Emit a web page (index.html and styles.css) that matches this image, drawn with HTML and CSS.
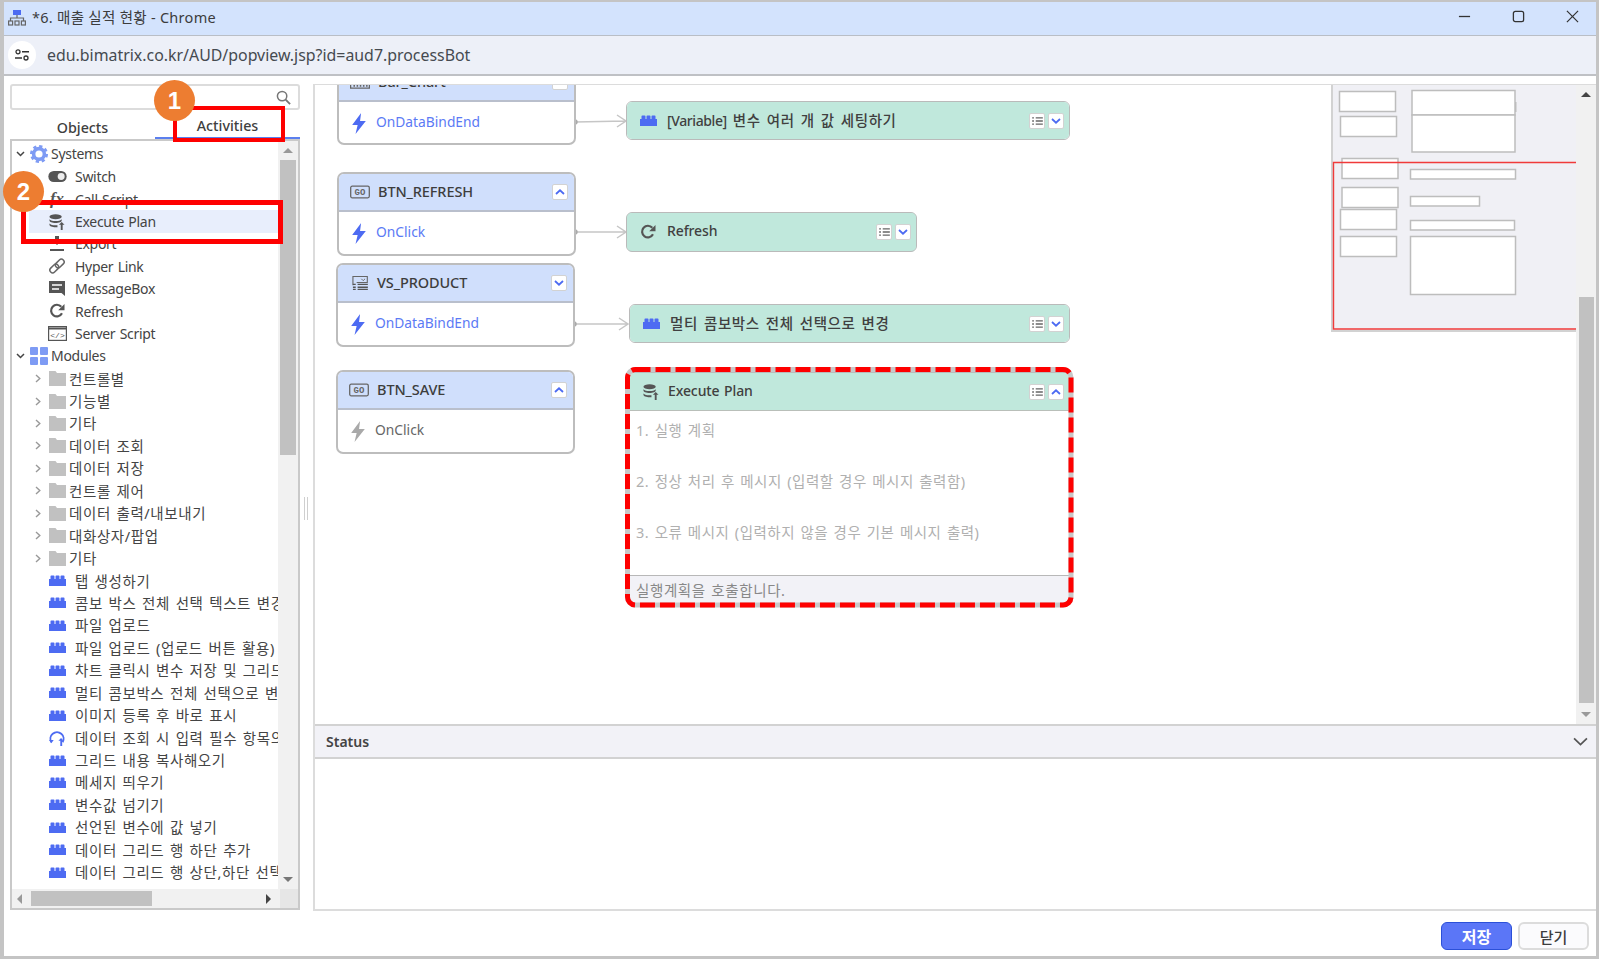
FILE: index.html
```html
<!DOCTYPE html>
<html lang="ko">
<head>
<meta charset="utf-8">
<title>*6. 매출 실적 현황 - Chrome</title>
<link rel="stylesheet" href="styles.css">
</head>
<body>
<svg class="defs" width="0" height="0" aria-hidden="true">
  <symbol id="i-lego" viewBox="0 0 17 11"><path d="M0 4h1.500V1.200Q1.500 .4 2.300 .4H4.700Q5.500 .4 5.500 1.200V4H6.500V1.200Q6.500 .4 7.300 .4H9.700Q10.500 .4 10.500 1.200V4H11.500V1.200Q11.500 .4 12.300 .4H14.700Q15.500 .4 15.500 1.200V4H17V11H0Z"/></symbol>
  <symbol id="i-bolt" viewBox="0 0 15 20"><path d="M9.500 0 1 11.500H6.200L4.200 20 14 7.500H8.500Z"/></symbol>
  <symbol id="i-list" viewBox="0 0 12 9"><path d="M0 1h2M4 1h8M0 4.500h2M4 4.500h8M0 8h2M4 8h8" stroke="#666" stroke-width="1.500" fill="none"/></symbol>
  <symbol id="i-up" viewBox="0 0 10 6"><path d="M1 5 5 1.300 9 5" fill="none" stroke="#4d6bf2" stroke-width="1.800"/></symbol>
  <symbol id="i-down" viewBox="0 0 10 6"><path d="M1 1 5 4.700 9 1" fill="none" stroke="#4d6bf2" stroke-width="1.800"/></symbol>
  <symbol id="i-db" viewBox="0 0 17 17"><g fill="#555"><ellipse cx="7" cy="3" rx="6.500" ry="2.700"/><path d="M.5 5v1.800C.5 8.300 3.300 9.500 7 9.500S13.500 8.300 13.500 6.800V5C13.500 6.500 10.700 7.500 7 7.500S.5 6.500.5 5ZM.5 9.500v1.800C.5 12.800 3.300 14 7 14H9V12H7C3.300 12 .5 11 .5 9.500Z"/><path d="M10.500 10.500 13.500 7.500 16.500 10.500H14.500V16H12.500V10.500Z" transform="translate(0 1)"/></g></symbol>
  <symbol id="i-ref" viewBox="0 0 16 16"><path d="M13 10.300A5.800 5.800 0 1 1 12.300 3.800" fill="none" stroke="#555" stroke-width="2.200"/><path d="M15.500 1V7.300H9.200Z" fill="#555"/></symbol>
  <symbol id="i-folder" viewBox="0 0 17 15"><path d="M0 0H6.500L8 2H17V15H0Z" fill="#c1c1c1"/></symbol>
  <symbol id="i-right" viewBox="0 0 6 9"><path d="M1 1 4.800 4.500 1 8" fill="none" stroke="#999" stroke-width="1.400"/></symbol>
  <symbol id="i-caret" viewBox="0 0 9 6"><path d="M1 1 4.500 4.500 8 1" fill="none" stroke="#444" stroke-width="1.500"/></symbol>
</svg>

<div class="window">
  <header class="titlebar">
    <svg class="title-ic" viewBox="0 0 18 16"><rect x="5" y="0" width="8" height="5" fill="#4d6bf2"/><path d="M9 5V8M2.500 11V8H15.500V11" fill="none" stroke="#666" stroke-width="1.200"/><g fill="none" stroke="#666" stroke-width="1.200"><rect x=".6" y="11" width="4" height="4"/><rect x="7" y="11" width="4" height="4"/><rect x="13.400" y="11" width="4" height="4"/></g></svg>
    <span class="title-text">*6. 매출 실적 현황 - Chrome</span>
    <div class="win-btns">
      <svg viewBox="0 0 14 14"><path d="M1 7H13" stroke="#333" stroke-width="1.400"/></svg>
      <svg viewBox="0 0 14 14"><rect x="1.500" y="1.500" width="11" height="11" rx="2" fill="none" stroke="#333" stroke-width="1.400"/></svg>
      <svg viewBox="0 0 14 14"><path d="M1 1 13 13M13 1 1 13" stroke="#333" stroke-width="1.300"/></svg>
    </div>
  </header>
  <div class="addrbar">
    <span class="site-btn"><svg viewBox="0 0 14 12"><circle cx="3" cy="2.800" r="2" fill="none" stroke="#333" stroke-width="1.300"/><path d="M7 2.800H14M0 9H7" stroke="#333" stroke-width="1.400"/><circle cx="11" cy="9" r="2" fill="none" stroke="#333" stroke-width="1.300"/></svg></span>
    <span class="url">edu.bimatrix.co.kr/AUD/popview.jsp?id=aud7.processBot</span>
  </div>

  <main class="workspace">
    <aside class="left">
      <div class="search"><svg viewBox="0 0 16 16"><circle cx="6.500" cy="6.500" r="5" fill="none" stroke="#777" stroke-width="1.600"/><path d="M10.300 10.300 15 15" stroke="#777" stroke-width="2"/></svg></div>
      <div class="tabs">
        <span class="tab">Objects</span>
        <span class="tab tab-on">Activities</span>
      </div>
      <div class="tree">
        <div class="tree-main">
          <div class="rows">
            <div class="row root"><svg class="caret"><use href="#i-caret"/></svg><svg class="root-ic" viewBox="0 0 20 20"><circle cx="10" cy="10" r="6" fill="none" stroke="#7e9bf4" stroke-width="4"/><circle cx="10" cy="10" r="8.300" fill="none" stroke="#7e9bf4" stroke-width="3.400" stroke-dasharray="3.500 3"/></svg><span class="en">Systems</span></div>
            <div class="row item"><span class="ib"><svg class="i-sw" viewBox="0 0 20 12"><rect width="20" height="12" rx="6" fill="#555"/><circle cx="14" cy="6" r="3.800" fill="#eee"/></svg></span><span class="en">Switch</span></div>
            <div class="row item"><span class="ib fx">fx</span><span class="en">Call Script</span></div>
            <div class="row item sel"><span class="ib"><svg class="i16"><use href="#i-db"/></svg></span><span class="en">Execute Plan</span></div>
            <div class="row item"><span class="ib"><svg class="i16" viewBox="0 0 16 16"><path d="M8 9 3.500 4.500H6V0H10V4.500H12.500ZM1 13H15V15H1Z" fill="#555"/></svg></span><span class="en">Export</span></div>
            <div class="row item"><span class="ib"><svg class="i16" viewBox="0 0 16 16"><g fill="none" stroke="#666" stroke-width="1.500"><rect x="8" y=".5" width="5.500" height="10" rx="2.750" transform="rotate(45 10.750 5.500)"/><rect x="2.500" y="5.500" width="5.500" height="10" rx="2.750" transform="rotate(45 5.250 10.500)"/></g></svg></span><span class="en">Hyper Link</span></div>
            <div class="row item"><span class="ib"><svg class="i16" viewBox="0 0 16 16"><path d="M0 0H16V15L12.500 12H0Z" fill="#555"/><path d="M3 4H13M3 8H10" stroke="#fff" stroke-width="1.400"/></svg></span><span class="en">MessageBox</span></div>
            <div class="row item"><span class="ib"><svg class="i16"><use href="#i-ref"/></svg></span><span class="en">Refresh</span></div>
            <div class="row item"><span class="ib"><svg class="i19" viewBox="0 0 19 15"><rect x=".6" y=".6" width="17.800" height="13.800" fill="none" stroke="#555" stroke-width="1.200"/><path d="M.6 2.500H18.400" stroke="#555" stroke-width="2"/><text x="9.500" y="11.500" text-anchor="middle" class="svgt" font-size="8" fill="#555">&lt;/&gt;</text></svg></span><span class="en">Server Script</span></div>
            <div class="row root"><svg class="caret"><use href="#i-caret"/></svg><svg class="root-ic" viewBox="0 0 18 18"><g fill="#7e9bf4"><rect width="8" height="8" rx="1"/><rect x="10" width="8" height="8" rx="1"/><rect y="10" width="8" height="8" rx="1"/><rect x="10" y="10" width="8" height="8" rx="1"/></g></svg><span class="en">Modules</span></div>
            <div class="row fold"><svg class="chev"><use href="#i-right"/></svg><svg class="folder"><use href="#i-folder"/></svg><span class="ko">컨트롤별</span></div>
            <div class="row fold"><svg class="chev"><use href="#i-right"/></svg><svg class="folder"><use href="#i-folder"/></svg><span class="ko">기능별</span></div>
            <div class="row fold"><svg class="chev"><use href="#i-right"/></svg><svg class="folder"><use href="#i-folder"/></svg><span class="ko">기타</span></div>
            <div class="row fold"><svg class="chev"><use href="#i-right"/></svg><svg class="folder"><use href="#i-folder"/></svg><span class="ko">데이터 조회</span></div>
            <div class="row fold"><svg class="chev"><use href="#i-right"/></svg><svg class="folder"><use href="#i-folder"/></svg><span class="ko">데이터 저장</span></div>
            <div class="row fold"><svg class="chev"><use href="#i-right"/></svg><svg class="folder"><use href="#i-folder"/></svg><span class="ko">컨트롤 제어</span></div>
            <div class="row fold"><svg class="chev"><use href="#i-right"/></svg><svg class="folder"><use href="#i-folder"/></svg><span class="ko">데이터 출력/내보내기</span></div>
            <div class="row fold"><svg class="chev"><use href="#i-right"/></svg><svg class="folder"><use href="#i-folder"/></svg><span class="ko">대화상자/팝업</span></div>
            <div class="row fold"><svg class="chev"><use href="#i-right"/></svg><svg class="folder"><use href="#i-folder"/></svg><span class="ko">기타</span></div>
            <div class="row item"><span class="ib"><svg class="lego"><use href="#i-lego"/></svg></span><span class="ko">탭 생성하기</span></div>
            <div class="row item"><span class="ib"><svg class="lego"><use href="#i-lego"/></svg></span><span class="ko">콤보 박스 전체 선택 텍스트 변경</span></div>
            <div class="row item"><span class="ib"><svg class="lego"><use href="#i-lego"/></svg></span><span class="ko">파일 업로드</span></div>
            <div class="row item"><span class="ib"><svg class="lego"><use href="#i-lego"/></svg></span><span class="ko">파일 업로드 (업로드 버튼 활용)</span></div>
            <div class="row item"><span class="ib"><svg class="lego"><use href="#i-lego"/></svg></span><span class="ko">차트 클릭시 변수 저장 및 그리드</span></div>
            <div class="row item"><span class="ib"><svg class="lego"><use href="#i-lego"/></svg></span><span class="ko">멀티 콤보박스 전체 선택으로 변경</span></div>
            <div class="row item"><span class="ib"><svg class="lego"><use href="#i-lego"/></svg></span><span class="ko">이미지 등록 후 바로 표시</span></div>
            <div class="row item"><span class="ib"><svg class="i16" viewBox="0 0 17 17"><path d="M2.500 13A7 7 0 1 1 14.500 13" fill="none" stroke="#4d6bf2" stroke-width="2"/><path d="M0 10.500H5L2.500 14ZM12 17V11.500H10L12.800 8.500 15.500 11.500H14V17Z" fill="#4d6bf2"/></svg></span><span class="ko">데이터 조회 시 입력 필수 항목의</span></div>
            <div class="row item"><span class="ib"><svg class="lego"><use href="#i-lego"/></svg></span><span class="ko">그리드 내용 복사해오기</span></div>
            <div class="row item"><span class="ib"><svg class="lego"><use href="#i-lego"/></svg></span><span class="ko">메세지 띄우기</span></div>
            <div class="row item"><span class="ib"><svg class="lego"><use href="#i-lego"/></svg></span><span class="ko">변수값 넘기기</span></div>
            <div class="row item"><span class="ib"><svg class="lego"><use href="#i-lego"/></svg></span><span class="ko">선언된 변수에 값 넣기</span></div>
            <div class="row item"><span class="ib"><svg class="lego"><use href="#i-lego"/></svg></span><span class="ko">데이터 그리드 행 하단 추가</span></div>
            <div class="row item"><span class="ib"><svg class="lego"><use href="#i-lego"/></svg></span><span class="ko">데이터 그리드 행 상단,하단 선택</span></div>
          </div>
          <div class="vscroll">
            <span class="arrow arrow-up"></span>
            <span class="vthumb"></span>
            <span class="arrow arrow-dn"></span>
          </div>
        </div>
        <div class="hscroll">
          <span class="arrow-l"></span>
          <span class="hthumb"></span>
          <span class="arrow-r"></span>
          <span class="corner"></span>
        </div>
      </div>
    </aside>

    <div class="splitter"><span class="grip"></span></div>

    <section class="right">
      <div class="canvas">
        <svg class="wires" viewBox="315 85 1281 639">
          <g fill="none" stroke="#c6c6c6" stroke-width="1.500">
            <path d="M575 122 626 121M617 115 626 121 617 127"/>
            <path d="M575 232 626 232M617 226 626 232 617 238"/>
            <path d="M574 324 628 324M619 318 628 324 619 330"/>
          </g>
          <g fill="#aaa"><circle cx="575" cy="122" r="2.700"/><circle cx="575" cy="232" r="2.700"/><circle cx="574" cy="324" r="2.700"/></g>
        </svg>

        <article class="node n-bar">
          <div class="nhead"><svg class="nic" viewBox="0 0 19 13"><path d="M.6 0V12.400H18.400V0" fill="none" stroke="#666" stroke-width="1.200"/><path d="M4 11V5M7 11V3M10 11V6M13 11V2M16 11V5" stroke="#666" stroke-width="1.500"/></svg><span class="ntitle">Bar_Chart</span><span class="sbtn"><svg class="chv"><use href="#i-up"/></svg></span></div>
          <div class="nbody"><svg class="bolt"><use href="#i-bolt"/></svg><span>OnDataBindEnd</span></div>
        </article>
        <article class="node n-refresh">
          <div class="nhead"><svg class="nic" viewBox="0 0 20 13"><rect x=".7" y=".7" width="18.600" height="11.600" rx="1.500" fill="none" stroke="#666" stroke-width="1.300"/><text x="10" y="9.700" text-anchor="middle" class="svgt" font-size="9" font-weight="700" fill="#666">GO</text></svg><span class="ntitle">BTN_REFRESH</span><span class="sbtn"><svg class="chv"><use href="#i-up"/></svg></span></div>
          <div class="nbody"><svg class="bolt"><use href="#i-bolt"/></svg><span>OnClick</span></div>
        </article>
        <article class="node n-vs">
          <div class="nhead"><svg class="nic" viewBox="0 0 19 15"><path d="M3 10V.6H18.400V7H7" fill="none" stroke="#666" stroke-width="1.200"/><path d="M12 3 14 5 16 3" fill="none" stroke="#666"/><path d="M3 9H6M3 12H6M3 14.500H6M8 9H19M8 12H19M8 14.500H19" stroke="#555" stroke-width="1.500"/></svg><span class="ntitle">VS_PRODUCT</span><span class="sbtn"><svg class="chv"><use href="#i-down"/></svg></span></div>
          <div class="nbody"><svg class="bolt"><use href="#i-bolt"/></svg><span>OnDataBindEnd</span></div>
        </article>
        <article class="node n-save">
          <div class="nhead"><svg class="nic" viewBox="0 0 20 13"><rect x=".7" y=".7" width="18.600" height="11.600" rx="1.500" fill="none" stroke="#666" stroke-width="1.300"/><text x="10" y="9.700" text-anchor="middle" class="svgt" font-size="9" font-weight="700" fill="#666">GO</text></svg><span class="ntitle">BTN_SAVE</span><span class="sbtn"><svg class="chv"><use href="#i-up"/></svg></span></div>
          <div class="nbody off"><svg class="bolt"><use href="#i-bolt"/></svg><span>OnClick</span></div>
        </article>

        <article class="act a-var">
          <div class="ahead"><svg class="alego"><use href="#i-lego"/></svg><span class="atitle ko"><span class="brk">[Variable]</span> 변수 여러 개 값 세팅하기</span><span class="sbtn"><svg class="lst"><use href="#i-list"/></svg></span><span class="sbtn"><svg class="chv"><use href="#i-down"/></svg></span></div>
        </article>
        <article class="act a-ref">
          <div class="ahead"><svg class="aref"><use href="#i-ref"/></svg><span class="atitle">Refresh</span><span class="sbtn"><svg class="lst"><use href="#i-list"/></svg></span><span class="sbtn"><svg class="chv"><use href="#i-down"/></svg></span></div>
        </article>
        <article class="act a-multi">
          <div class="ahead"><svg class="alego"><use href="#i-lego"/></svg><span class="atitle ko">멀티 콤보박스 전체 선택으로 변경</span><span class="sbtn"><svg class="lst"><use href="#i-list"/></svg></span><span class="sbtn"><svg class="chv"><use href="#i-down"/></svg></span></div>
        </article>
        <article class="act a-exec">
          <div class="ahead"><svg class="adb"><use href="#i-db"/></svg><span class="atitle">Execute Plan</span><span class="sbtn"><svg class="lst"><use href="#i-list"/></svg></span><span class="sbtn"><svg class="chv"><use href="#i-up"/></svg></span></div>
          <div class="abody">
            <p class="ko">1. 실행 계획</p>
            <p class="ko">2. 정상 처리 후 메시지 (입력할 경우 메시지 출력함)</p>
            <p class="ko">3. 오류 메시지 (입력하지 않을 경우 기본 메시지 출력)</p>
          </div>
          <div class="afoot ko">실행계획을 호출합니다.</div>
        </article>

        <svg class="minimap" viewBox="1331 85 265 247">
          <rect x="1331" y="85" width="265" height="247" fill="#f0f0f5"/>
          <path d="M1332 85V331H1596" fill="none" stroke="#d2d2d2" stroke-width="2"/>
          <g fill="#fff" stroke="#bdbdbd" stroke-width="1.500">
            <rect x="1339.500" y="91.500" width="56" height="20"/>
            <rect x="1340.500" y="116.500" width="56" height="20"/>
            <rect x="1412" y="90.500" width="103" height="24.500"/>
            <rect x="1412" y="115" width="103" height="37"/>
            <rect x="1342" y="158.500" width="56" height="20"/>
            <rect x="1342" y="187.500" width="56" height="20"/>
            <rect x="1340.500" y="209.500" width="56" height="20"/>
            <rect x="1340.500" y="236.500" width="56" height="20"/>
            <rect x="1410.500" y="169.500" width="105" height="9.500"/>
            <rect x="1410.500" y="196.500" width="69" height="9.500"/>
            <rect x="1410.500" y="220.500" width="104" height="9.500"/>
            <rect x="1410.500" y="236.500" width="105" height="58"/>
          </g>
          <rect x="1515" y="102" width="1.500" height="10" fill="#bdbdbd"/>
          <path d="M1576 162.500H1333.500V329H1576" fill="none" stroke="#f03a3a" stroke-width="1.400"/>
        </svg>

        <div class="cscroll">
          <span class="arrow arrow-up"></span>
          <span class="cthumb"></span>
          <span class="arrow arrow-dn"></span>
        </div>
      </div>
      <div class="status-head"><span>Status</span><svg viewBox="0 0 14 8"><path d="M1 1 7 6.800 13 1" fill="none" stroke="#555" stroke-width="1.600"/></svg></div>
      <div class="status-body"></div>
    </section>
  </main>

  <footer class="footer">
    <button class="btn btn-primary">저장</button>
    <button class="btn">닫기</button>
  </footer>
</div>

<div class="marks">
  <svg class="dash" viewBox="0 0 1599 959">
    <rect x="627.500" y="369.500" width="443.500" height="235.500" rx="8" fill="none" stroke="#c8c8c8" stroke-width="5"/>
    <rect x="627.500" y="369.500" width="443.500" height="235.500" rx="8" fill="none" stroke="#fe0000" stroke-width="5" stroke-dasharray="15 5"/>
  </svg>
  <div class="redbox rb-1"></div>
  <div class="redbox rb-2"></div>
  <div class="badge bd-1">1</div>
  <div class="badge bd-2">2</div>
</div>
</body>
</html>
```

FILE: styles.css
```css
* { box-sizing: border-box; }
html, body { margin: 0; height: 100%; }
body {
  position: relative;
  overflow: hidden;
  background: #fff;
  color: #444;
  font-family: "Noto Sans", "Noto Sans CJK KR", sans-serif;
  font-size: 14px;
}
.defs { position: absolute; }
.svgt { font-family: "Liberation Mono", monospace; }
.ko { font-size: 14.5px; letter-spacing: .6px; word-spacing: 1.3px; }
.en { letter-spacing: -.3px; word-spacing: 1px; }

.window {
  display: flex;
  flex-direction: column;
  height: 959px;
  border: solid #c4c4c4;
  border-width: 2px 3px 3px 4px;
}

/* Title and address bars */
.titlebar {
  display: flex;
  align-items: center;
  height: 34px;
  padding: 0 0 4px 4px;
  background: #d3e3fd;
  border-bottom: 1px solid #b9bec6;
  flex: none;
}
.title-ic { width: 18px; height: 16px; margin-right: 6px; margin-top: 2px; }
.title-text { font-size: 14.5px; letter-spacing: .28px; color: #3c3c3c; }
.win-btns { margin-left: auto; display: flex; align-items: center; gap: 41px; padding-right: 17px; }
.win-btns svg { width: 13px; height: 13px; display: block; }

.addrbar {
  display: flex;
  align-items: center;
  height: 40px;
  padding-left: 4px;
  background: #edf0f8;
  border-bottom: 2px solid #bfc1c5;
  flex: none;
}
.site-btn {
  width: 28px; height: 28px;
  border-radius: 50%;
  background: #fff;
  display: flex; align-items: center; justify-content: center;
  margin-right: 11px;
}
.site-btn svg { width: 14px; height: 12px; }
.url { font-size: 15.9px; color: #454a50; }

/* Workspace */
.workspace { flex: 1; display: flex; min-height: 0; }

.left {
  width: 297px;
  padding: 8px 1px 1px 6px;
  display: flex;
  flex-direction: column;
  flex: none;
}
.search {
  height: 26px;
  border: 2px solid #dcdcdc;
  border-radius: 3px;
  display: flex;
  align-items: center;
  justify-content: flex-end;
  padding-right: 7px;
  flex: none;
}
.search svg { width: 15px; height: 15px; }
.tabs { display: flex; height: 29px; flex: none; }
.tab {
  flex: 0 0 145px;
  text-align: center;
  font-weight: 500;
  font-size: 14.3px;
  line-height: 36px;
  color: #3f3f3f;
}
.tab-on {
  flex: 0 0 145px;
  line-height: 32px;
  border-bottom: 2px solid #5b7fee;
}

.tree {
  flex: 1;
  min-height: 0;
  display: flex;
  flex-direction: column;
  border: solid #c9c9c9;
  border-width: 0 2px 2px 2px;
}
.tree-main { flex: 1; min-height: 0; display: flex; }
.rows { flex: 1; min-width: 0; overflow: hidden; padding-top: 2px; border-top: 2px solid #c9c9c9; }
.row {
  display: flex;
  align-items: center;
  height: 22.44px;
  white-space: nowrap;
  font-size: 14px;
  color: #444;
}
.row > .ko { margin-bottom: 1px; }
.root > .en { margin-bottom: 2px; }
.root { padding-left: 4px; }
.caret { width: 9px; height: 6px; margin-right: 5px; flex: none; }
.root-ic { width: 18px; height: 18px; margin-right: 3px; flex: none; }
.item { padding-left: 35px; }
.ib { width: 20px; margin-right: 8px; display: flex; justify-content: center; align-items: center; flex: none; }
.ib svg { display: block; }
.ib .i16 { width: 16px; height: 16px; }
.ib .i19 { width: 19px; height: 15px; }
.ib .i-sw { width: 19px; height: 11px; }
.fx { font: italic 700 17px "Liberation Serif", serif; color: #555; }
.lego { width: 17px; height: 11px; fill: #4d6bf2; }
.sel { margin-left: 17px; padding-left: 18px; background: #e8eefc; }
.fold { padding-left: 23px; }
.chev { width: 6px; height: 9px; margin-right: 8px; flex: none; }
.folder { width: 17px; height: 15px; margin-right: 3px; flex: none; }

.vscroll, .cscroll {
  display: flex;
  flex-direction: column;
  align-items: center;
  background: #f1f1f1;
}
.vscroll { width: 20px; flex: none; border-top: 2px solid #c9c9c9; }
.arrow { flex: none; width: 0; height: 0; border-left: 5px solid transparent; border-right: 5px solid transparent; }
.arrow-up { border-bottom: 5px solid #999; margin: 7px 0 7px; }
.arrow-dn { border-top: 5px solid #777; margin: auto 0 7px; }
.vthumb { width: 16px; height: 295px; background: #c1c1c1; flex: none; }
.hscroll {
  height: 19px;
  display: flex;
  align-items: center;
  background: #f1f1f1;
  flex: none;
}
.arrow-l, .arrow-r { width: 0; height: 0; border-top: 5px solid transparent; border-bottom: 5px solid transparent; flex: none; }
.arrow-l { border-right: 5px solid #999; margin: 0 9px 0 5px; }
.hthumb { width: 121px; height: 15px; background: #c1c1c1; flex: none; }
.arrow-r { border-left: 5px solid #444; margin-left: 114px; }
.corner { margin-left: auto; width: 18px; height: 19px; background: #e6e6e6; }

.splitter { width: 12px; padding-right: 3px; flex: none; display: flex; align-items: center; justify-content: center; }
.grip { width: 4px; height: 23px; margin-top: 30px; border: solid #cfcfcf; border-width: 0 1.500px; }

.right {
  flex: 1;
  min-width: 0;
  margin-top: 8px;
  display: flex;
  flex-direction: column;
  border: solid #dcdcdc;
  border-width: 1px 0 2px 2px;
}
.canvas { position: relative; flex: 1; min-height: 0; overflow: hidden; background: #fff; }
.wires { position: absolute; left: 0; top: 0; width: 1281px; height: 639px; }

/* Diagram nodes, placed on the free canvas */
.node {
  position: absolute;
  width: 239px;
  border: 2px solid #bdbdbd;
  border-radius: 7px;
  background: #fff;
  overflow: hidden;
}
.n-bar { left: 22px; top: -23px; height: 83px; }
.n-refresh { left: 22px; top: 87px; height: 84px; }
.n-vs { left: 21px; top: 178px; height: 84px; }
.n-save { left: 21px; top: 285px; height: 84px; }
.nhead {
  display: flex;
  align-items: center;
  height: 38px;
  padding: 0 6px 0 11px;
  background: #d0dffc;
  border-bottom: 2px solid #b9bfcc;
}
.nic { width: 20px; height: 14px; margin-right: 8px; flex: none; }
.ntitle { font-size: 14.5px; font-weight: 500; color: #3d3d3d; margin-right: auto; margin-bottom: 3px; letter-spacing: -.1px; }
.sbtn {
  width: 16px; height: 16px;
  background: #fff;
  border: 1px solid #d2d2d2;
  border-radius: 2px;
  display: flex; align-items: center; justify-content: center;
  flex: none;
}
.chv { width: 10px; height: 6px; }
.lst { width: 11px; height: 8px; }
.nbody {
  display: flex;
  align-items: center;
  height: 42px;
  padding-left: 12px;
  color: #5b7af5;
  font-size: 13.8px;
}
.nbody span { margin-bottom: 3px; }
.bolt { width: 16px; height: 21px; margin-right: 9px; fill: #4d6bf2; flex: none; }
.off { color: #666; }
.off .bolt { fill: #a9a9a9; }

.act {
  position: absolute;
  border: 1.500px solid #bababa;
  border-radius: 6px;
  background: #c0e8dc;
  overflow: hidden;
}
.a-var { left: 311px; top: 16px; width: 444px; height: 39px; }
.a-ref { left: 311px; top: 127px; width: 291px; height: 40px; }
.a-multi { left: 314px; top: 219px; width: 441px; height: 39px; }
.a-exec { left: 314px; top: 287px; width: 441px; height: 232px; background: #fff; display: flex; flex-direction: column; }
.ahead {
  height: 37px;
  display: flex;
  align-items: center;
  gap: 3px;
  padding: 0 5px 0 13px;
  background: #c0e8dc;
  flex: none;
}
.alego { width: 17px; height: 11px; fill: #4d6bf2; margin-right: 7px; flex: none; }
.aref { width: 16px; height: 16px; margin-right: 8px; flex: none; }
.adb { width: 16px; height: 16px; margin-right: 6px; flex: none; }
.atitle { margin-right: auto; margin-bottom: 3px; font-size: 14px; font-weight: 500; color: #404040; letter-spacing: -.1px; word-spacing: 1px; }
.atitle.ko { font-size: 14.5px; letter-spacing: .6px; word-spacing: 1.7px; }
.brk { font-size: 14px; letter-spacing: -.4px; }
.abody { flex: 1; padding: 0 0 0 6px; border-top: 1.500px solid #b9bfb9; }
.abody p { margin: 0; height: 51px; line-height: 38px; color: #b0b0b0; letter-spacing: .5px; word-spacing: 1.2px; }
.afoot {
  height: 28px;
  line-height: 28px;
  padding-left: 6px;
  background: #f2f2f7;
  border-top: 1.500px solid #b8b8b8;
  color: #888;
  flex: none;
}

.minimap { position: absolute; right: 0; top: 0; width: 265px; height: 247px; }
.cscroll { position: absolute; right: 0; top: 0; bottom: 0; width: 20px; }
.cthumb { width: 15px; height: 406px; margin-top: 193px; background: #c1c1c1; flex: none; }
.cscroll .arrow-up { border-bottom-color: #444; }
.cscroll .arrow-dn { border-top-color: #999; }

.status-head {
  height: 35px;
  display: flex;
  align-items: center;
  justify-content: space-between;
  padding: 0 8px 0 11px;
  background: #f2f2f7;
  border: solid #d2d2d2;
  border-width: 2px 0;
  font-size: 14px;
  font-weight: 600;
  color: #444;
  flex: none;
}
.status-head svg { width: 15px; height: 9px; }
.status-body { height: 150px; background: #fff; flex: none; }

.footer {
  height: 45px;
  display: flex;
  justify-content: flex-end;
  align-items: center;
  gap: 6px;
  padding: 5px 7px 0 0;
  flex: none;
}
.btn {
  width: 71px;
  height: 28px;
  padding: 0;
  border: 2px solid #dcdcdc;
  border-radius: 6px;
  background: #fbfbfd;
  color: #3c3c3c;
  font: 500 15px "Noto Sans", "Noto Sans CJK KR", sans-serif;
}
.btn-primary { background: #5b76f7; border: 1.5px solid #2b50d8; color: #fff; font-weight: 700; font-size: 16px; }

/* Callouts drawn over the screenshot */
.marks { position: absolute; inset: 0; pointer-events: none; }
.dash { position: absolute; left: 0; top: 0; width: 1599px; height: 959px; }
.redbox { position: absolute; border: 4px solid #fe0000; }
.rb-1 { left: 173px; top: 106px; width: 112px; height: 36px; }
.rb-2 { left: 21px; top: 200px; width: 262px; height: 44px; border-width: 5px; }
.badge {
  position: absolute;
  width: 41px; height: 41px;
  border-radius: 50%;
  background: #ed7d31;
  color: #fff;
  font: 700 24px/41px "Liberation Sans", sans-serif;
  text-align: center;
}
.bd-1 { left: 154px; top: 80px; }
.bd-2 { left: 3px; top: 171px; }
```
